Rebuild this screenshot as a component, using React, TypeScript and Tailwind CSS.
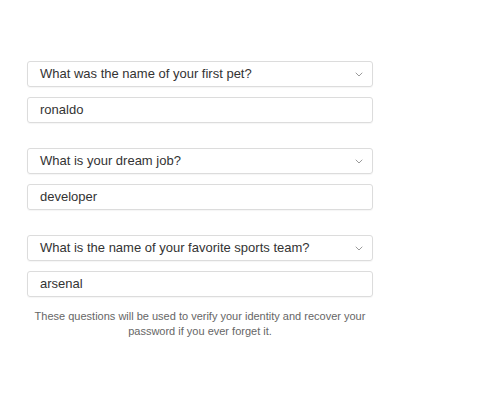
import React from 'react';

const questions = [
  { q: 'What was the name of your first pet?', a: 'ronaldo' },
  { q: 'What is your dream job?', a: 'developer' },
  { q: 'What is the name of your favorite sports team?', a: 'arsenal' },
];

function Chevron() {
  return (
    <svg width="8" height="5" viewBox="0 0 8 5" fill="none" className="text-[#9a9a9a]">
      <path d="M1 1l3 3 3-3" stroke="currentColor" strokeWidth="1" strokeLinecap="round" strokeLinejoin="round" />
    </svg>
  );
}

function App() {
  return (
    <div className="w-[500px] h-[400px] bg-white font-['Liberation_Sans',Arial,sans-serif] text-[#333]">
      <div className="pt-[61px] pl-[27px] w-[373px] flex flex-col gap-[25px]">
        {questions.map((item) => (
          <div key={item.q} className="flex flex-col gap-[10px]">
            <div className="h-[26px] border border-[#dcdcdc] rounded-[3px] flex items-center justify-between pl-[12px] pr-[9px] shadow-[0_1px_1px_rgba(0,0,0,0.04)]">
              <span className="text-[13px]">{item.q}</span>
              <Chevron />
            </div>
            <div className="h-[26px] border border-[#dcdcdc] rounded-[3px] flex items-center pl-[12px] shadow-[0_1px_1px_rgba(0,0,0,0.04)]">
              <span className="text-[13px]">{item.a}</span>
            </div>
          </div>
        ))}
        <p className="-mt-[13px] text-[11px] leading-[15px] text-center text-[#666] px-[4px]">
          These questions will be used to verify your identity and recover your password if you ever forget it.
        </p>
      </div>
    </div>
  );
}

export default App;
